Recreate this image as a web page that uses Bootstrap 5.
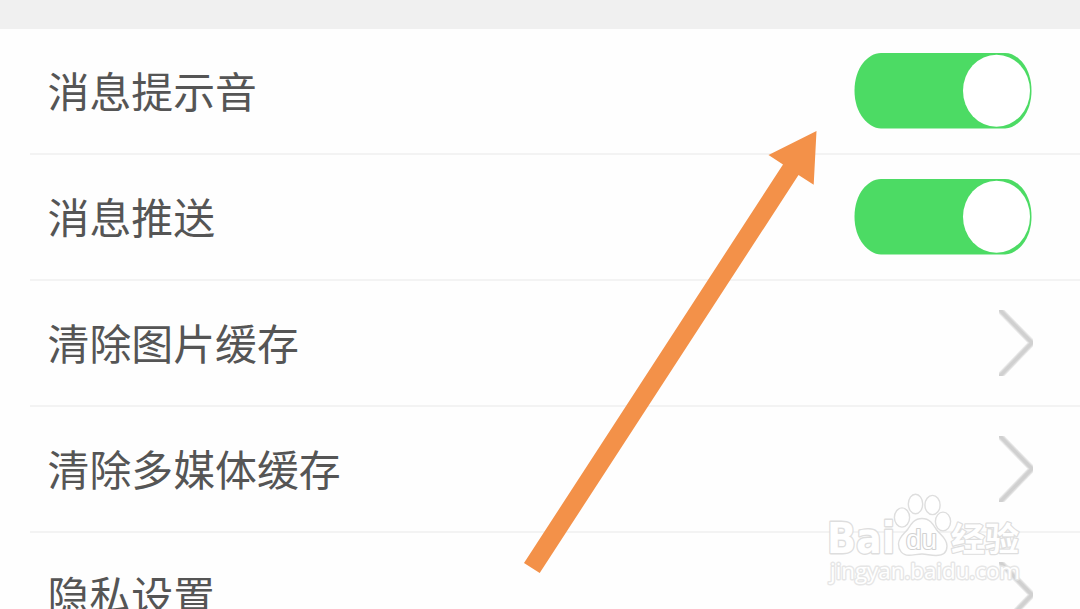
<!DOCTYPE html>
<html lang="zh-CN">
<head>
    <meta charset="UTF-8">
    <meta name="viewport" content="width=device-width, initial-scale=1.0">
    <title>设置</title>
    <link href="https://cdn.jsdelivr.net/npm/bootstrap@5.3.0/dist/css/bootstrap.min.css" rel="stylesheet">
    <style>
        body {
            background-color: #fefefe;
            color: #555;
            font-family: "Noto Sans CJK SC", sans-serif;
        }
        .settings-page {
            height: 609px;
        }
        .top-gap {
            height: 29px;
            background-color: #f0f0f0;
        }
        .setting-row {
            height: 126px;
            margin-left: 30px;
            padding: 0 47px 0 17.5px;
            border-bottom: 2px solid #f3f3f3;
        }
        .setting-name {
            font-size: 41.9px;
            line-height: 60px;
            padding-bottom: 2px;
        }
        .toggle {
            margin-right: 1px;
        }
        .overlay {
            pointer-events: none;
        }
    </style>
</head>
<body>
  <svg class="d-none" aria-hidden="true">
    <symbol id="toggleOn" viewBox="0 0 178 76">
      <path d="M27 0H151C158 0 164 4 169 10C174.500 17 177.500 27 177.500 37.700C177.500 48 174.500 58 169 65C164 71 158 75.500 151 75.500H27C20 75.500 14 71 9 65C3.500 58 .5 48 .5 37.700C.5 27 3.500 17 9 10C14 4 20 0 27 0Z" fill="#4cdb64"/>
      <ellipse cx="142.500" cy="37.700" rx="33.500" ry="36" fill="#fff"/>
    </symbol>
    <symbol id="chevronRight" viewBox="0 0 34 66">
      <path d="M-1 -2L33 32.8L-1 68" fill="none" stroke="#ececec" stroke-width="6.6"/>
      <path d="M-1 -2L33 32.8L-1 68" fill="none" stroke="#dcdcdc" stroke-width="5"/>
      <path d="M-1 -2L33 32.8L-1 68" fill="none" stroke="#d0d0d0" stroke-width="3.2"/>
    </symbol>
  </svg>

  <main class="settings-page position-relative overflow-hidden">
    <div class="top-gap"></div>
    <div class="setting-row d-flex align-items-center justify-content-between">
      <span class="setting-name">消息提示音</span>
      <svg class="toggle" width="178" height="76" role="img" aria-label="开"><use href="#toggleOn"/></svg>
    </div>
    <div class="setting-row d-flex align-items-center justify-content-between">
      <span class="setting-name">消息推送</span>
      <svg class="toggle" width="178" height="76" role="img" aria-label="开"><use href="#toggleOn"/></svg>
    </div>
    <div class="setting-row d-flex align-items-center justify-content-between">
      <span class="setting-name">清除图片缓存</span>
      <svg width="34" height="66"><use href="#chevronRight"/></svg>
    </div>
    <div class="setting-row d-flex align-items-center justify-content-between">
      <span class="setting-name">清除多媒体缓存</span>
      <svg width="34" height="66"><use href="#chevronRight"/></svg>
    </div>
    <div class="setting-row d-flex align-items-center justify-content-between">
      <span class="setting-name">隐私设置</span>
      <svg width="34" height="66"><use href="#chevronRight"/></svg>
    </div>

    <!-- arrow and watermark lie over the list -->
    <svg class="overlay position-absolute top-0 start-0" width="1080" height="609" viewBox="0 0 1080 609">
      <path d="M816.5 131L768.5 155L783 164.5L524 563L539.7 573L798.5 175L813.7 184.7Z" fill="#f39149"/>
      <g fill="#fff" stroke="#dedede" stroke-width="1.4" stroke-linejoin="round">
        <text x="827" y="552.5" font-family="'DejaVu Sans', sans-serif" font-weight="700" font-size="42" stroke-width="2.8" paint-order="stroke" textLength="68" lengthAdjust="spacingAndGlyphs">Bai</text>
        <ellipse cx="902" cy="517.5" rx="7.6" ry="9.6"/>
        <ellipse cx="915.5" cy="504" rx="7.2" ry="9.8"/>
        <ellipse cx="932.5" cy="505" rx="7.6" ry="9.6"/>
        <ellipse cx="943" cy="521.5" rx="7.6" ry="9.4"/>
        <path d="M922 518.5C930 518.5 933 524 936 529C940 535 947 538 947 546C947 553 942 555.5 936 555.5C930 555.5 927 554 922 554C917 554 914 555.3 909 555.3C902 555.3 898.5 550 898.5 544C898.5 537 904 534 908 529C911 524 914 518.5 922 518.5Z"/>
        <text x="906" y="548.5" font-family="'Liberation Sans', sans-serif" font-size="27" stroke="#d2d2d2" stroke-width="2.2" paint-order="stroke" textLength="31" lengthAdjust="spacingAndGlyphs">du</text>
        <text x="951" y="550.5" font-family="'Noto Sans CJK SC', sans-serif" font-weight="700" font-size="33" stroke-width="2.4" paint-order="stroke" textLength="68" lengthAdjust="spacingAndGlyphs">经验</text>
        <text x="830" y="579" font-family="'Open Sans', sans-serif" font-size="22" stroke="#e6e6e6" stroke-width="2.8" paint-order="stroke" textLength="190" lengthAdjust="spacingAndGlyphs">jingyan.baidu.com</text>
      </g>
    </svg>
  </main>
  <script src="https://cdn.jsdelivr.net/npm/bootstrap@5.3.0/dist/js/bootstrap.bundle.min.js"></script>
</body>
</html>
